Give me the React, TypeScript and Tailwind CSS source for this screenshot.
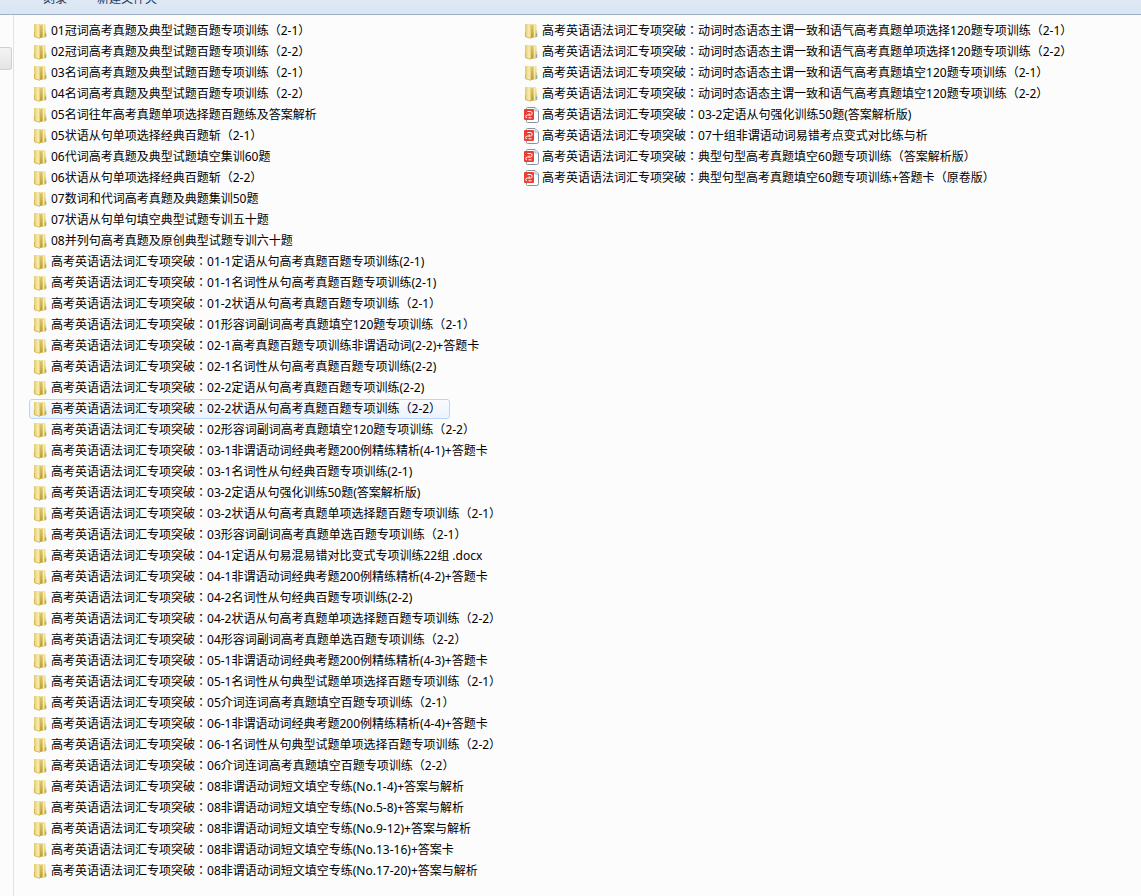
import React from 'react';

type Kind = 'folder' | 'pdf';

const PREFIX = '高考英语语法词汇专项突破：';

const leftNames: string[] = [
  '01冠词高考真题及典型试题百题专项训练（2-1）',
  '02冠词高考真题及典型试题百题专项训练（2-2）',
  '03名词高考真题及典型试题百题专项训练（2-1）',
  '04名词高考真题及典型试题百题专项训练（2-2）',
  '05名词往年高考真题单项选择题百题练及答案解析',
  '05状语从句单项选择经典百题斩（2-1）',
  '06代词高考真题及典型试题填空集训60题',
  '06状语从句单项选择经典百题斩（2-2）',
  '07数词和代词高考真题及典题集训50题',
  '07状语从句单句填空典型试题专训五十题',
  '08并列句高考真题及原创典型试题专训六十题',
  PREFIX + '01-1定语从句高考真题百题专项训练(2-1)',
  PREFIX + '01-1名词性从句高考真题百题专项训练(2-1)',
  PREFIX + '01-2状语从句高考真题百题专项训练（2-1）',
  PREFIX + '01形容词副词高考真题填空120题专项训练（2-1）',
  PREFIX + '02-1高考真题百题专项训练非谓语动词(2-2)+答题卡',
  PREFIX + '02-1名词性从句高考真题百题专项训练(2-2)',
  PREFIX + '02-2定语从句高考真题百题专项训练(2-2)',
  PREFIX + '02-2状语从句高考真题百题专项训练（2-2）',
  PREFIX + '02形容词副词高考真题填空120题专项训练（2-2）',
  PREFIX + '03-1非谓语动词经典考题200例精练精析(4-1)+答题卡',
  PREFIX + '03-1名词性从句经典百题专项训练(2-1)',
  PREFIX + '03-2定语从句强化训练50题(答案解析版)',
  PREFIX + '03-2状语从句高考真题单项选择题百题专项训练（2-1）',
  PREFIX + '03形容词副词高考真题单选百题专项训练（2-1）',
  PREFIX + '04-1定语从句易混易错对比变式专项训练22组 .docx',
  PREFIX + '04-1非谓语动词经典考题200例精练精析(4-2)+答题卡',
  PREFIX + '04-2名词性从句经典百题专项训练(2-2)',
  PREFIX + '04-2状语从句高考真题单项选择题百题专项训练（2-2）',
  PREFIX + '04形容词副词高考真题单选百题专项训练（2-2）',
  PREFIX + '05-1非谓语动词经典考题200例精练精析(4-3)+答题卡',
  PREFIX + '05-1名词性从句典型试题单项选择百题专项训练（2-1）',
  PREFIX + '05介词连词高考真题填空百题专项训练（2-1）',
  PREFIX + '06-1非谓语动词经典考题200例精练精析(4-4)+答题卡',
  PREFIX + '06-1名词性从句典型试题单项选择百题专项训练（2-2）',
  PREFIX + '06介词连词高考真题填空百题专项训练（2-2）',
  PREFIX + '08非谓语动词短文填空专练(No.1-4)+答案与解析',
  PREFIX + '08非谓语动词短文填空专练(No.5-8)+答案与解析',
  PREFIX + '08非谓语动词短文填空专练(No.9-12)+答案与解析',
  PREFIX + '08非谓语动词短文填空专练(No.13-16)+答案卡',
  PREFIX + '08非谓语动词短文填空专练(No.17-20)+答案与解析',
];

const rightItems: { name: string; kind: Kind }[] = [
  { name: PREFIX + '动词时态语态主谓一致和语气高考真题单项选择120题专项训练（2-1）', kind: 'folder' },
  { name: PREFIX + '动词时态语态主谓一致和语气高考真题单项选择120题专项训练（2-2）', kind: 'folder' },
  { name: PREFIX + '动词时态语态主谓一致和语气高考真题填空120题专项训练（2-1）', kind: 'folder' },
  { name: PREFIX + '动词时态语态主谓一致和语气高考真题填空120题专项训练（2-2）', kind: 'folder' },
  { name: PREFIX + '03-2定语从句强化训练50题(答案解析版)', kind: 'pdf' },
  { name: PREFIX + '07十组非谓语动词易错考点变式对比练与析', kind: 'pdf' },
  { name: PREFIX + '典型句型高考真题填空60题专项训练（答案解析版）', kind: 'pdf' },
  { name: PREFIX + '典型句型高考真题填空60题专项训练+答题卡（原卷版）', kind: 'pdf' },
];

const HOVERED = PREFIX + '02-2状语从句高考真题百题专项训练（2-2）';

function FolderIcon() {
  return (
    <svg width="16" height="16" viewBox="0 0 16 16" className="shrink-0" aria-hidden="true">
      <defs>
        <linearGradient id="folder-front" x1="0" x2="1" y1="0" y2="0">
          <stop offset="0" stopColor="#e0ca70" />
          <stop offset="0.35" stopColor="#ecdc90" />
          <stop offset="0.7" stopColor="#f7eeb6" />
          <stop offset="1" stopColor="#dfc562" />
        </linearGradient>
        <linearGradient id="folder-back" x1="0" x2="0" y1="0" y2="1">
          <stop offset="0" stopColor="#f1e5a4" />
          <stop offset="0.5" stopColor="#e9d680" />
          <stop offset="1" stopColor="#dabd52" />
        </linearGradient>
        <linearGradient id="folder-inner" x1="0" x2="0" y1="0" y2="1">
          <stop offset="0" stopColor="#e0c970" />
          <stop offset="1" stopColor="#bf962c" />
        </linearGradient>
      </defs>
      <path d="M5 1h6.600q1 0 1 1v5l.6.7v5.900q0 .6-.7.700L7 15z" fill="url(#folder-back)" />
      <path d="M6.500 2.500 9.800 1.500v12.300L6.500 15.300z" fill="url(#folder-inner)" />
      <path d="M10.300 1.500V14" stroke="#f9f2c4" strokeWidth="1" />
      <path d="M1.300 1h4.200q1.600.4 1.600 1.800v12.700L2 14.300q-1-.3-1-1.200V1.400z" fill="url(#folder-front)" />
      <path d="M1.400 9v4.200q0 .6.700.8l4.900 1.300" fill="none" stroke="#cdae45" strokeWidth=".7" />
      <path d="M12.700 10.400v3" stroke="#6badcf" strokeWidth="1.100" />
    </svg>
  );
}

function PdfIcon() {
  return (
    <svg width="16" height="16" viewBox="0 0 16 16" className="shrink-0" aria-hidden="true">
      <path
        d="M3.500.5H11L14.500 4v9.700q0 1.800-1.800 1.800H3.500q-1 0-1-1v-13q0-1 1-1z"
        fill="#fff"
        stroke="#8792a5"
      />
      <path d="M11 .8V4h3.200" fill="#e9edf3" stroke="#a2acba" strokeWidth=".8" />
      <rect x="0" y="2" width="10" height="11" rx="1" fill="#ea3e32" />
      <path
        d="M3.500 4.500h2.700q2 0 2 1.800t-2 1.800H3.300q-1.600 0-1.600 1.400t1.300 1.300M5.200 6.400v1.700M4.500 10.800h3"
        fill="none"
        stroke="#fff"
        strokeWidth="1"
      />
    </svg>
  );
}

/* Full-width punctuation is set in the TC face, which centres the colon in its cell. */
function Name({ text }: { text: string }) {
  return (
    <span lang="zh-Hans" className="whitespace-pre">
      {text.split(/([：（）])/).map((part, i) =>
        i % 2 === 1 ? (
          <span key={i} lang="zh-Hant" className="font-['Noto_Sans_CJK_TC',sans-serif]">
            {part}
          </span>
        ) : (
          part
        ),
      )}
    </span>
  );
}

function Item({ name, kind }: { name: string; kind: Kind }) {
  const frame =
    name === HOVERED
      ? 'border-[#b8d6fb] bg-linear-to-b from-[#fafcfe] to-[#ebf3fd]'
      : 'border-transparent';
  return (
    <li className="flex h-[21px] items-center">
      <a
        href="#"
        className={`flex h-5 items-center gap-0.5 rounded-[3px] border pr-2 pl-[3px] leading-4 ${frame}`}
      >
        {kind === 'folder' ? <FolderIcon /> : <PdfIcon />}
        <Name text={name} />
      </a>
    </li>
  );
}

export default function App() {
  return (
    <div className="flex min-h-screen flex-col overflow-x-hidden bg-[#fcfcfc] font-['Noto_Sans','Noto_Sans_CJK_SC',sans-serif] text-xs text-black">
      <header className="flex h-[15px] items-end gap-[30px] overflow-hidden border-b border-[#a0afc3] bg-linear-to-b from-[#dfe8f5] to-[#dae6f4] pb-[7px] pl-[43px] leading-4 text-[#1e395b]">
        <button type="button" className="shrink-0">刻录</button>
        <button type="button" className="shrink-0">新建文件夹</button>
      </header>
      <div className="flex grow">
        <aside className="w-3.5 shrink-0 border-r border-[#d6e5f5] pt-8">
          <div className="h-[23px] w-3 rounded-r-[3px] border border-l-0 border-[#cfcfcf] bg-linear-to-b from-[#f4f4f4] to-[#e4e4e4]" />
        </aside>
        <main className="flex grow items-start pt-[5px] pb-3.5 pl-[15px]">
          <ul className="w-[491px] shrink-0">
            {leftNames.map((name) => (
              <Item key={name} name={name} kind="folder" />
            ))}
          </ul>
          <ul className="grow">
            {rightItems.map((item) => (
              <Item key={item.name} name={item.name} kind={item.kind} />
            ))}
          </ul>
        </main>
      </div>
    </div>
  );
}
